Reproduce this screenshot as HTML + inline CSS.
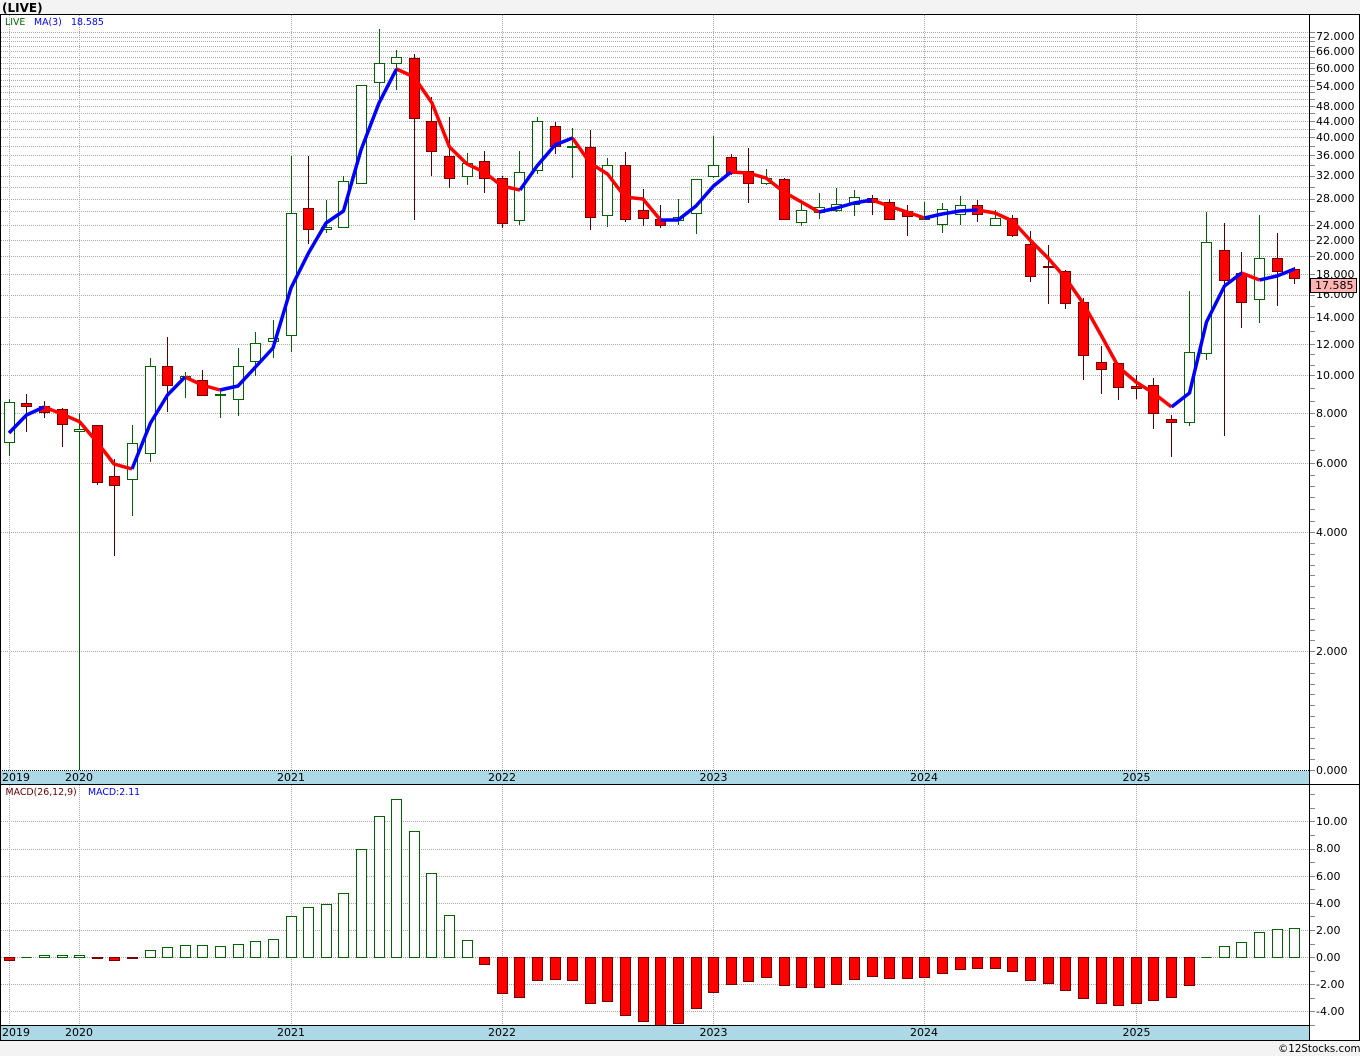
<!DOCTYPE html>
<html><head><meta charset="utf-8"><title>(LIVE)</title>
<style>
html,body{margin:0;padding:0;background:#f3f3f3;width:1360px;height:1056px;overflow:hidden}
svg{display:block;position:absolute;left:0;top:0}
text{font-family:"DejaVu Sans","Liberation Sans",sans-serif;font-size:11px;fill:#000}
.s{font-size:9.4px}
.c{shape-rendering:crispEdges}
</style></head><body>
<svg width="1360" height="1056" viewBox="0 0 1360 1056">
<rect width="1360" height="1056" fill="#f3f3f3"/>
<rect x="0" y="14" width="1360" height="1027" fill="#fff"/>
<g class="c">
<rect x="0" y="771" width="1309" height="13" fill="#add8e6"/>
<rect x="0" y="1026" width="1309" height="14" fill="#add8e6"/>
<path fill="none" stroke="#aaa" stroke-dasharray="1 1" d="M1 32.5H1309M1 37.5H1309M1 41.5H1309M1 46.5H1309M1 51.5H1309M1 57.5H1309M1 63.5H1309M1 68.5H1309M1 74.5H1309M1 80.5H1309M1 86.5H1309M1 92.5H1309M1 99.5H1309M1 106.5H1309M1 113.5H1309M1 121.5H1309M1 129.5H1309M1 137.5H1309M1 146.5H1309M1 155.5H1309M1 165.5H1309M1 176.5H1309M1 187.5H1309M1 199.5H1309M1 211.5H1309M1 225.5H1309M1 240.5H1309M1 256.5H1309M1 274.5H1309M1 295.5H1309M1 317.5H1309M1 344.5H1309M1 375.5H1309M1 413.5H1309M1 463.5H1309M1 532.5H1309M1 651.5H1309M1 821.5H1309M1 849.5H1309M1 876.5H1309M1 903.5H1309M1 930.5H1309M1 957.5H1309M1 984.5H1309M1 1011.5H1309M9.5 15V770M79.5 15V770M291.5 15V770M502.5 15V770M713.5 15V770M924.5 15V770M1136.5 15V770M9.5 785V1025M79.5 785V1025M291.5 785V1025M502.5 785V1025M713.5 785V1025M924.5 785V1025M1136.5 785V1025"/>
<path fill="none" stroke="#888" d="M1310 32.5h5M1310 37.5h5M1310 41.5h5M1310 46.5h5M1310 51.5h5M1310 57.5h5M1310 63.5h5M1310 68.5h5M1310 74.5h5M1310 80.5h5M1310 86.5h5M1310 92.5h5M1310 99.5h5M1310 106.5h5M1310 113.5h5M1310 121.5h5M1310 129.5h5M1310 137.5h5M1310 146.5h5M1310 155.5h5M1310 165.5h5M1310 176.5h5M1310 187.5h5M1310 199.5h5M1310 211.5h5M1310 225.5h5M1310 240.5h5M1310 256.5h5M1310 274.5h5M1310 295.5h5M1310 306.5h5M1310 317.5h5M1310 331.5h5M1310 344.5h5M1310 354.5h5M1310 365.5h5M1310 375.5h5M1310 388.5h5M1310 401.5h5M1310 413.5h5M1310 426.5h5M1310 438.5h5M1310 450.5h5M1310 463.5h5M1310 475.5h5M1310 486.5h5M1310 497.5h5M1310 509.5h5M1310 521.5h5M1310 532.5h5M1310 543.5h5M1310 554.5h5M1310 565.5h5M1310 575.5h5M1310 586.5h5M1310 597.5h5M1310 608.5h5M1310 619.5h5M1310 630.5h5M1310 640.5h5M1310 651.5h5M1310 663.5h5M1310 673.5h5M1310 684.5h5M1310 694.5h5M1310 705.5h5M1310 716.5h5M1310 727.5h5M1310 738.5h5M1310 748.5h5M1310 759.5h5M1310 770.5h5M1310 794.5h5M1310 808.5h5M1310 821.5h5M1310 835.5h5M1310 849.5h5M1310 862.5h5M1310 876.5h5M1310 889.5h5M1310 903.5h5M1310 916.5h5M1310 930.5h5M1310 944.5h5M1310 957.5h5M1310 971.5h5M1310 984.5h5M1310 998.5h5M1310 1011.5h5M1310 1025.5h5"/>
<!-- wicks -->
<path fill="none" stroke="#006400" d="M9.5 399V456M79.5 413V770M132.5 425V516M150.5 358V462M185.5 372V398M220.5 388V418M238.5 348V416M255.5 332V376M273.5 320V358M291.5 156V352M326.5 200V233M343.5 176V227M379.5 29V100M396.5 50V90M467.5 153V185M519.5 151V225M537.5 117V174M572.5 128V178M607.5 158V227M678.5 199V225M696.5 179V234M713.5 136V178M766.5 169V185M801.5 202V226M819.5 193V219M836.5 188V212M854.5 190V216M924.5 202V220M942.5 203V233M960.5 196V225M995.5 210V225M1189.5 291V426M1206.5 212V360M1259.5 215V323"/>
<path fill="none" stroke="#5a0000" d="M26.5 394V432M44.5 401V418M62.5 408V447M97.5 425V485M114.5 459V556M167.5 337V412M202.5 370V396M308.5 156V244M414.5 54V220M431.5 97V176M449.5 117V188M484.5 151V193M502.5 176V228M555.5 122V154M590.5 130V230M625.5 152V222M643.5 189V226M660.5 205V228M731.5 154V175M748.5 148V203M784.5 178V220M872.5 195V215M889.5 199V219M907.5 205V236M977.5 200V222M1012.5 215V237M1030.5 231V282M1048.5 245V304M1065.5 270V309M1083.5 298V380M1101.5 346V394M1118.5 363V400M1136.5 375V399M1153.5 378V429M1171.5 415V457M1224.5 223V436M1241.5 252V328M1277.5 233V306M1294.5 267V284"/>
<!-- bodies -->
<path fill="#fff" stroke="#006400" d="M4.5 402.5h10V442.5h-10zM74.5 429.5h10V431.5h-10zM127.5 443.5h10V479.5h-10zM145.5 366.5h10V453.5h-10zM180.5 376.5h10V378.5h-10zM215.5 394.5h10V395.5h-10zM233.5 366.5h10V399.5h-10zM250.5 343.5h10V361.5h-10zM268.5 338.5h10V341.5h-10zM286.5 213.5h10V335.5h-10zM321.5 227.5h10V229.5h-10zM338.5 181.5h10V227.5h-10zM356.5 85.5h10V183.5h-10zM374.5 63.5h10V82.5h-10zM391.5 57.5h10V63.5h-10zM462.5 163.5h10V176.5h-10zM514.5 172.5h10V220.5h-10zM532.5 121.5h10V170.5h-10zM567.5 146.5h10V147.5h-10zM602.5 165.5h10V215.5h-10zM673.5 217.5h10V220.5h-10zM691.5 179.5h10V213.5h-10zM708.5 165.5h10V176.5h-10zM761.5 178.5h10V183.5h-10zM796.5 210.5h10V222.5h-10zM814.5 207.5h10V212.5h-10zM831.5 204.5h10V210.5h-10zM849.5 197.5h10V204.5h-10zM919.5 218.5h10V219.5h-10zM937.5 209.5h10V224.5h-10zM955.5 205.5h10V214.5h-10zM990.5 218.5h10V225.5h-10zM1184.5 352.5h10V422.5h-10zM1201.5 242.5h10V353.5h-10zM1254.5 258.5h10V299.5h-10z"/>
<path fill="#f00" stroke="#7a0000" d="M21.5 403.5h10V406.5h-10zM39.5 406.5h10V412.5h-10zM57.5 409.5h10V424.5h-10zM92.5 425.5h10V482.5h-10zM109.5 476.5h10V485.5h-10zM162.5 366.5h10V385.5h-10zM197.5 380.5h10V395.5h-10zM303.5 208.5h10V229.5h-10zM409.5 58.5h10V118.5h-10zM426.5 121.5h10V151.5h-10zM444.5 156.5h10V178.5h-10zM479.5 161.5h10V178.5h-10zM497.5 178.5h10V223.5h-10zM550.5 126.5h10V146.5h-10zM585.5 147.5h10V217.5h-10zM620.5 165.5h10V219.5h-10zM638.5 210.5h10V218.5h-10zM655.5 219.5h10V225.5h-10zM726.5 157.5h10V173.5h-10zM743.5 171.5h10V183.5h-10zM779.5 179.5h10V219.5h-10zM867.5 198.5h10V202.5h-10zM884.5 202.5h10V219.5h-10zM902.5 211.5h10V216.5h-10zM972.5 205.5h10V214.5h-10zM1007.5 218.5h10V235.5h-10zM1025.5 244.5h10V276.5h-10zM1043.5 266.5h10V267.5h-10zM1060.5 271.5h10V303.5h-10zM1078.5 302.5h10V355.5h-10zM1096.5 362.5h10V369.5h-10zM1113.5 363.5h10V387.5h-10zM1131.5 386.5h10V388.5h-10zM1148.5 385.5h10V413.5h-10zM1166.5 419.5h10V422.5h-10zM1219.5 250.5h10V280.5h-10zM1236.5 273.5h10V302.5h-10zM1272.5 258.5h10V271.5h-10zM1289.5 269.5h10V278.5h-10z"/>
<!-- macd -->
<path fill="#fff" stroke="#006400" d="M21.5 957.5h10M39.5 955.5h10V957.5h-10zM57.5 955.5h10V957.5h-10zM74.5 955.5h10V957.5h-10zM145.5 950.5h10V957.5h-10zM162.5 947.5h10V957.5h-10zM180.5 945.5h10V957.5h-10zM197.5 945.5h10V957.5h-10zM215.5 946.5h10V957.5h-10zM233.5 944.5h10V957.5h-10zM250.5 941.5h10V957.5h-10zM268.5 939.5h10V957.5h-10zM286.5 916.5h10V957.5h-10zM303.5 907.5h10V957.5h-10zM321.5 904.5h10V957.5h-10zM338.5 893.5h10V957.5h-10zM356.5 849.5h10V957.5h-10zM374.5 816.5h10V957.5h-10zM391.5 799.5h10V957.5h-10zM409.5 831.5h10V957.5h-10zM426.5 873.5h10V957.5h-10zM444.5 915.5h10V957.5h-10zM462.5 940.5h10V957.5h-10zM1201.5 957.5h10M1219.5 946.5h10V957.5h-10zM1236.5 942.5h10V957.5h-10zM1254.5 932.5h10V957.5h-10zM1272.5 929.5h10V957.5h-10zM1289.5 928.5h10V957.5h-10z"/>
<path fill="#f00" stroke="#7a0000" d="M4.5 957.5h10V960.5h-10zM92.5 957.5h10V958.5h-10zM109.5 957.5h10V960.5h-10zM127.5 957.5h10V958.5h-10zM479.5 957.5h10V964.5h-10zM497.5 957.5h10V993.5h-10zM514.5 957.5h10V997.5h-10zM532.5 957.5h10V980.5h-10zM550.5 957.5h10V979.5h-10zM567.5 957.5h10V980.5h-10zM585.5 957.5h10V1003.5h-10zM602.5 957.5h10V1001.5h-10zM620.5 957.5h10V1015.5h-10zM638.5 957.5h10V1021.5h-10zM655.5 957.5h10V1025.5h-10zM673.5 957.5h10V1023.5h-10zM691.5 957.5h10V1008.5h-10zM708.5 957.5h10V992.5h-10zM726.5 957.5h10V984.5h-10zM743.5 957.5h10V981.5h-10zM761.5 957.5h10V977.5h-10zM779.5 957.5h10V985.5h-10zM796.5 957.5h10V987.5h-10zM814.5 957.5h10V987.5h-10zM831.5 957.5h10V984.5h-10zM849.5 957.5h10V979.5h-10zM867.5 957.5h10V976.5h-10zM884.5 957.5h10V978.5h-10zM902.5 957.5h10V978.5h-10zM919.5 957.5h10V977.5h-10zM937.5 957.5h10V973.5h-10zM955.5 957.5h10V969.5h-10zM972.5 957.5h10V968.5h-10zM990.5 957.5h10V968.5h-10zM1007.5 957.5h10V971.5h-10zM1025.5 957.5h10V980.5h-10zM1043.5 957.5h10V983.5h-10zM1060.5 957.5h10V990.5h-10zM1078.5 957.5h10V998.5h-10zM1096.5 957.5h10V1003.5h-10zM1113.5 957.5h10V1005.5h-10zM1131.5 957.5h10V1003.5h-10zM1148.5 957.5h10V1000.5h-10zM1166.5 957.5h10V997.5h-10zM1184.5 957.5h10V985.5h-10z"/>
<path fill="none" stroke="#000" stroke-dasharray="1 1" d="M0 770.5H1309"/>
<path fill="none" stroke="#000" d="M0 14.5H1360M0 784.5H1360M0 1025.5H1310M0 1040.5H1360M.5 14V1041M1309.5 14V1041M1359.5 14V1041"/>
</g>
<!-- MA -->
<g fill="none" stroke-width="3.5" stroke-linejoin="round">
<path stroke="#f00" d="M44 407L62 414L79.5 421.7L97 442L114 464L132 469M185 377L202 385L220 390M396.5 69L414 77L432 103L449.5 147L467 164L484 172L502 186L520 190M572.5 138L590 163L607.5 174L625 197L643 199L660.5 220M731 172L748 173L766 178L784 192L801.5 202L819 212M872 200L889 206L907 212L924.5 218M977.5 210L995 213L1012.5 221L1030 240L1048 258L1065.5 278L1083 303L1101 335L1118.5 367L1136 382L1153.5 393L1171.5 407M1241.5 273L1259.5 280"/>
<path stroke="#00f" d="M9 433L26.5 415L44 407M132 469L150.5 423L167.5 395L185 377M220 390L238 386L255.5 367L273 348L291 288L308.5 253L326 223L343.5 211L361 150L379 103L396.5 69M520 190L537 166L555 145L572.5 138M660.5 220L678 220L696 206L713.5 186L731 172M819 212L836.5 208L854 203L872 200M924.5 218L942 214L960 211L977.5 210M1171.5 407L1189.5 393L1206.5 322L1224.5 286L1241.5 273M1259.5 280L1277 276L1294.5 269"/>
</g>
<!-- axis labels -->
<g>
<text x="1316" y="40">72.000</text><text x="1316" y="55">66.000</text><text x="1316" y="72">60.000</text><text x="1316" y="90">54.000</text><text x="1316" y="110">48.000</text><text x="1316" y="125">44.000</text><text x="1316" y="141">40.000</text><text x="1316" y="159">36.000</text><text x="1316" y="179">32.000</text><text x="1316" y="202">28.000</text><text x="1316" y="229">24.000</text><text x="1316" y="244">22.000</text><text x="1316" y="260">20.000</text><text x="1316" y="278">18.000</text><text x="1316" y="298">16.000</text><text x="1316" y="321">14.000</text><text x="1316" y="348">12.000</text><text x="1316" y="379">10.000</text><text x="1316" y="417">8.000</text><text x="1316" y="467">6.000</text><text x="1316" y="536">4.000</text><text x="1316" y="655">2.000</text><text x="1316" y="774">0.000</text>
</g>
<rect x="1310.5" y="278.5" width="46" height="14" fill="#ffb3b3" stroke="#000" class="c"/>
<text x="1315" y="289">17.585</text>
<g>
<text x="1316" y="825">10.00</text><text x="1316" y="852">8.00</text><text x="1316" y="880">6.00</text><text x="1316" y="907">4.00</text><text x="1316" y="934">2.00</text><text x="1316" y="961">0.00</text><text x="1316" y="988">-2.00</text><text x="1316" y="1015">-4.00</text>
</g>
<g>
<text x="2" y="781">2019</text><text x="65" y="781">2020</text><text x="277" y="781">2021</text><text x="488" y="781">2022</text><text x="699.500" y="781">2023</text><text x="910" y="781">2024</text><text x="1122.500" y="781">2025</text>
<text x="2" y="1036">2019</text><text x="65" y="1036">2020</text><text x="277" y="1036">2021</text><text x="488" y="1036">2022</text><text x="699.500" y="1036">2023</text><text x="910" y="1036">2024</text><text x="1122.500" y="1036">2025</text>
</g>
<text x="2" y="12" style="font-weight:bold;font-size:12px">(LIVE)</text>
<text class="s" x="5" y="25" style="fill:#006400">LIVE</text>
<text class="s" x="34" y="25" style="fill:#00f">MA(3)</text>
<text class="s" x="71" y="25" style="fill:#00f">18.585</text>
<text class="s" x="5.500" y="795" style="fill:#600">MACD(26,12,9)</text>
<text class="s" x="88" y="795" style="fill:#00f">MACD:2.11</text>
<text x="1278" y="1052" style="font-size:10.300px">©12Stocks.com</text>
</svg>
</body></html>
